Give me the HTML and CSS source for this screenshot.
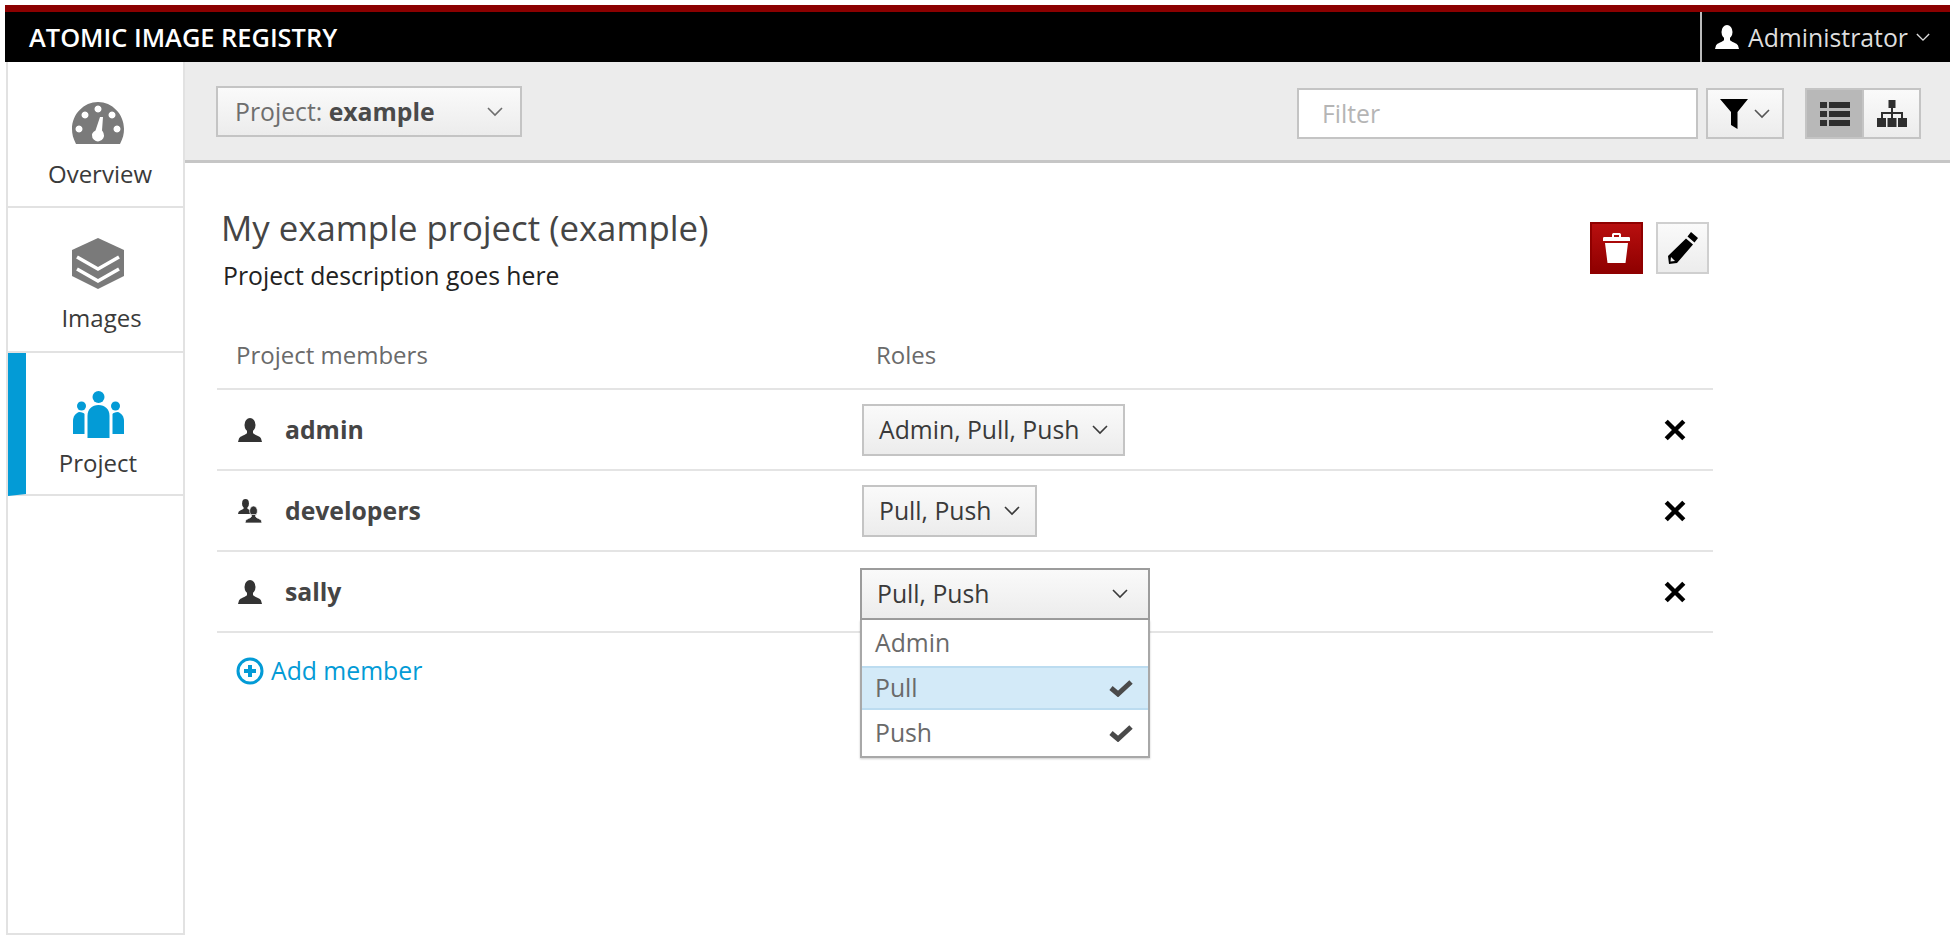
FILE: index.html
```html
<!DOCTYPE html>
<html lang="en">
<head>
    <meta charset="UTF-8">
    <title>Atomic Image Registry</title>
    <link rel="stylesheet" href="styles.css">
</head>
<body>
    <svg class="defs" width="0" height="0">
        <symbol id="chevron" viewBox="0 0 16 10"><polyline points="1,1 8,8 15,1" fill="none" stroke="currentColor" stroke-width="1.6"/></symbol>
        <symbol id="person" viewBox="0 0 24 24"><ellipse cx="12" cy="7" rx="5.5" ry="7"/><path d="M9 12 V15 C8 17 2 18 1 20.5 L0 24 H24 L23 20.5 C22 18 16 17 15 15 V12 Z"/></symbol>
        <symbol id="check" viewBox="0 0 24 18"><polyline points="2,9 9,15 22,3" fill="none" stroke="currentColor" stroke-width="5"/></symbol>
        <symbol id="close" viewBox="0 0 20 20"><path d="M2 2 L18 18 M18 2 L2 18" fill="none" stroke="currentColor" stroke-width="4"/></symbol>
    </svg>

    <div class="app">
        <header class="topbar">
            <div class="brand">ATOMIC IMAGE REGISTRY</div>
            <div class="user-menu">
                <svg class="user-icon"><use href="#person"/></svg>
                <span>Administrator</span>
                <svg class="chevron"><use href="#chevron"/></svg>
            </div>
        </header>

        <div class="layout">
            <nav class="sidebar">
                <a class="nav-item">
                    <svg class="nav-icon" width="52" height="42" viewBox="0 0 52 42">
                        <path fill-rule="evenodd" d="M4 42 C1 36 0 32 0 27 C0 12 12 0 26 0 C40 0 52 12 52 27 C52 32 51 36 48 42 Z M7 23.5 a3.5 3.5 0 1 0 .01 0 Z M13 9.5 a3.5 3.5 0 1 0 .01 0 Z M26 3.5 a3.5 3.5 0 1 0 .01 0 Z M40 9.5 a3.5 3.5 0 1 0 .01 0 Z M45 23.5 a3.5 3.5 0 1 0 .01 0 Z M28 15 L23.5 28.5 C20.5 30 20 32 20 33 a6 6 0 1 0 11.5 -2 C31 30 30.5 29 30 28.5 L31 15 Z"/>
                    </svg>
                    <span>Overview</span>
                </a>
                <a class="nav-item">
                    <svg class="nav-icon" width="52" height="51" viewBox="0 0 52 51">
                        <path d="M26 0 L52 12 V38 L26 51 L0 38 V12 Z"/>
                        <path d="M5 19 L26 31 L47 19 M5 31 L26 43 L47 31" fill="none" stroke="#fff" stroke-width="3.5"/>
                    </svg>
                    <span>Images</span>
                </a>
                <a class="nav-item active">
                    <svg class="nav-icon" width="51" height="47" viewBox="0 0 51 47">
                        <circle cx="25.5" cy="6" r="6"/>
                        <circle cx="8.5" cy="15" r="4.5"/>
                        <circle cx="42.5" cy="15" r="4.5"/>
                        <path d="M14.5 47 V25 C14.5 18 19 14 25.5 14 C32 14 36.5 18 36.5 25 V47 Z"/>
                        <path d="M0 43 V30 C0 25 3 22 6 21 C9 21 11 22 11.5 23 V43 Z"/>
                        <path d="M51 43 V30 C51 25 48 22 45 21 C42 21 40 22 39.5 23 V43 Z"/>
                    </svg>
                    <span>Project</span>
                </a>
            </nav>

            <main class="main">
                <div class="toolbar">
                    <button class="btn project-select">
                        <span>Project: <b>example</b></span>
                        <svg class="chevron"><use href="#chevron"/></svg>
                    </button>
                    <div class="toolbar-right">
                        <input class="filter-input" type="text" placeholder="Filter">
                        <button class="btn filter-btn">
                            <svg width="28" height="30" viewBox="0 0 28 30"><path d="M0 0 H28 L17.5 13 V30 L11 26 V13 Z"/></svg>
                            <svg class="chevron"><use href="#chevron"/></svg>
                        </button>
                        <div class="view-toggle">
                            <button class="btn active">
                                <svg width="30" height="24" viewBox="0 0 30 24"><path d="M0 0 H7 V6 H0 Z M9 0 H30 V6 H9 Z M0 9 H7 V15 H0 Z M9 9 H30 V15 H9 Z M0 18 H7 V24 H0 Z M9 18 H30 V24 H9 Z"/></svg>
                            </button>
                            <button class="btn">
                                <svg width="30" height="27" viewBox="0 0 30 27"><path d="M11.5 0 H18.5 V8 H16 V12 H26 V18 H30 V27 H21 V18 H24 V14 H16 V18 H19.500 V27 H10.500 V18 H14 V14 H6 V18 H9 V27 H0 V18 H4 V12 H14 V8 H11.500 Z"/></svg>
                            </button>
                        </div>
                    </div>
                </div>

                <div class="content">
                    <div class="project-head">
                        <div>
                            <h1>My example project (example)</h1>
                            <p>Project description goes here</p>
                        </div>
                        <div class="project-actions">
                            <button class="btn-icon danger">
                                <svg width="27" height="30" viewBox="0 0 27 30"><path d="M9 4 V1.500 C9 .5 10 0 11 0 H16 C17 0 18 .5 18 1.500 V4 H26 C27 4 27 5 27 6 V8 H0 V6 C0 5 0 4 1 4 Z M11 4 H16 V2 H11 Z M2 10 H25 L22.500 30 H4.500 Z"/></svg>
                            </button>
                            <button class="btn-icon">
                                <svg width="30" height="32" viewBox="0 0 30 32"><path d="M23 0 L30 6 L26.500 10.500 L19.500 4.500 Z M18 6.500 L25 12.500 L9 31 L1 32 L0 24 Z M3 25 L2.500 29.500 L7 29 Z" fill-rule="evenodd"/></svg>
                            </button>
                        </div>
                    </div>

                    <div class="member-row member-head">
                        <span class="head-name">Project members</span>
                        <span class="head-roles">Roles</span>
                    </div>
                    <div class="member-row">
                        <div class="member-name">
                            <svg class="member-icon"><use href="#person"/></svg>
                            admin
                        </div>
                        <button class="btn role-btn"><span>Admin, Pull, Push</span><svg class="chevron"><use href="#chevron"/></svg></button>
                        <svg class="remove"><use href="#close"/></svg>
                    </div>
                    <div class="member-row">
                        <div class="member-name">
                            <svg class="member-icon" viewBox="0 0 24 24">
                                <use href="#person" x="0" y="0" width="15" height="15"/>
                                <use href="#person" x="7" y="7" width="17" height="17" stroke="#fff" stroke-width="1"/>
                            </svg>
                            developers
                        </div>
                        <button class="btn role-btn"><span>Pull, Push</span><svg class="chevron"><use href="#chevron"/></svg></button>
                        <svg class="remove"><use href="#close"/></svg>
                    </div>
                    <div class="member-row">
                        <div class="member-name">
                            <svg class="member-icon"><use href="#person"/></svg>
                            sally
                        </div>
                        <div class="role-select open">
                            <button class="btn role-btn"><span>Pull, Push</span><svg class="chevron"><use href="#chevron"/></svg></button>
                            <ul class="role-menu">
                                <li>Admin</li>
                                <li class="hover">Pull<svg class="check"><use href="#check"/></svg></li>
                                <li>Push<svg class="check"><use href="#check"/></svg></li>
                            </ul>
                        </div>
                        <svg class="remove"><use href="#close"/></svg>
                    </div>
                    <a class="add-member">
                        <svg width="28" height="28" viewBox="0 0 28 28"><circle cx="14" cy="14" r="12" fill="none" stroke="currentColor" stroke-width="3"/><path d="M14 8 V20 M8 14 H20" stroke="currentColor" stroke-width="4"/></svg>
                        Add member
                    </a>
                </div>
            </main>
        </div>
    </div>
</body>
</html>
```

FILE: styles.css
```css
body {
    margin: 0;
    background: #fff;
    font-family: "Open Sans", "Noto Sans", sans-serif;
    font-size: 24.75px;
    color: #363636;
}
.defs {
    display: block;
    height: 0;
}
.app {
    margin: 5px 6px 0 5px;
}
.chevron {
    width: 16px;
    height: 10px;
    flex: none;
}

/* top bar */
.topbar {
    display: flex;
    justify-content: space-between;
    height: 50px;
    border-top: 7px solid #8b0000;
    background: #000;
    color: #fff;
}
.brand {
    padding-left: 24px;
    font-size: 25.4px;
    font-weight: 600;
    line-height: 50px;
}
.user-menu {
    display: flex;
    align-items: center;
    width: 250px;
    padding-left: 13px;
    box-sizing: border-box;
    border-left: 2px solid #bbb;
    color: #ddd;
}
.user-icon {
    width: 24px;
    height: 24px;
    margin-right: 9px;
    fill: #fff;
}
.user-menu span {
    font-size: 24.8px;
}
.user-menu .chevron {
    width: 14px;
    height: 9px;
    margin-left: 8px;
}

/* sidebar */
.layout {
    display: flex;
}
.sidebar {
    width: 179px;
    height: 873px;
    flex: none;
    margin-left: 1px;
    box-sizing: border-box;
    border: 2px solid #e2e2e2;
    border-top: 0;
}
.nav-item {
    display: flex;
    flex-direction: column;
    align-items: center;
    height: 145px;
    padding-left: 5px;
    box-sizing: border-box;
    border-bottom: 2px solid #e2e2e2;
    color: #3a3a3a;
    font-size: 24px;
}
.nav-icon {
    flex: none;
    fill: #7a7a7a;
}
.nav-item:nth-child(1) {
    height: 146px;
    padding-top: 40px;
}
.nav-item:nth-child(1) span {
    margin: 13px 0 0 4px;
}
.nav-item:nth-child(2) {
    padding-top: 30px;
}
.nav-item:nth-child(2) span {
    margin: 12px 0 0 7px;
}
.nav-item.active {
    height: 143px;
    padding-top: 38px;
    border-left: 18px solid #039bd6;
    padding-right: 18px;
}
.nav-item.active .nav-icon {
    fill: #039bd6;
}
.nav-item.active span {
    margin-top: 8px;
}

/* toolbar */
.main {
    flex: 1;
    min-width: 0;
}
.toolbar {
    display: flex;
    justify-content: space-between;
    height: 101px;
    padding: 24px 29px 0 31px;
    box-sizing: border-box;
    border-bottom: 3px solid #c6c6c6;
    background: #ececec;
}
.toolbar-right {
    display: flex;
    align-items: flex-start;
    padding-top: 2px;
}
.btn {
    display: flex;
    align-items: center;
    justify-content: space-between;
    box-sizing: border-box;
    border: 2px solid #c4c4c4;
    background: linear-gradient(#fafafa, #ececec);
    color: #363636;
    font-family: inherit;
    font-size: 24.75px;
    padding: 0;
}
.project-select {
    width: 306px;
    height: 51px;
    padding: 0 17px;
    color: #6e6e6e;
}
.project-select b {
    color: #4a4a4a;
}
.filter-input {
    width: 401px;
    height: 51px;
    box-sizing: border-box;
    padding: 0 23px;
    border: 2px solid #c4c4c4;
    background: #fff;
    font-family: inherit;
    font-size: 24.75px;
}
.filter-input::placeholder {
    color: #b5b5b5;
}
.filter-btn {
    width: 78px;
    height: 51px;
    margin-left: 8px;
    padding: 0 12px;
    color: #555;
}
.view-toggle {
    display: flex;
    margin-left: 21px;
}
.view-toggle .btn {
    justify-content: center;
    width: 59px;
    height: 51px;
}
.view-toggle .btn + .btn {
    margin-left: -2px;
}
.view-toggle .btn.active {
    background: #b8b8b8;
}
.view-toggle svg {
    fill: #2e2e2e;
}

/* project */
.content {
    width: 1496px;
    margin-left: 32px;
}
.project-head {
    display: flex;
    justify-content: space-between;
    align-items: flex-start;
    height: 142px;
    padding: 43px 4px 0 4px;
    box-sizing: border-box;
}
.project-head h1 {
    margin: 0;
    font-size: 34.75px;
    font-weight: 400;
    line-height: 44px;
    color: #454545;
}
.project-head p {
    margin: 11px 0 0 2px;
    line-height: 30px;
    color: #222;
}
.project-actions {
    display: flex;
    gap: 13px;
    padding-top: 16px;
}
.btn-icon {
    display: flex;
    align-items: center;
    justify-content: center;
    width: 53px;
    height: 52px;
    padding: 0;
    box-sizing: border-box;
    border: 2px solid #cfcfcf;
    background: linear-gradient(#fafafa, #ececec);
}
.btn-icon.danger {
    border-color: #8f0000;
    background: linear-gradient(#b80f0f, #8f0000);
    fill: #fff;
}

/* members */
.member-row {
    display: flex;
    align-items: center;
    height: 81px;
    box-sizing: border-box;
    border-bottom: 2px solid #e4e4e4;
    padding-right: 27px;
}
.member-head {
    height: 85px;
    padding-top: 15px;
    color: #6a6a6a;
    font-size: 24px;
}
.head-name {
    width: 659px;
    padding-left: 19px;
    box-sizing: border-box;
}
.member-name {
    display: flex;
    align-items: center;
    width: 645px;
    padding-left: 21px;
    box-sizing: border-box;
    font-weight: 700;
    color: #454545;
}
.member-icon {
    width: 24px;
    height: 24px;
    margin-right: 23px;
    fill: #333;
}
.role-btn {
    height: 52px;
    gap: 13px;
    padding: 0 15px;
    color: #3a3a3a;
}
.remove {
    width: 22px;
    height: 22px;
    margin-left: auto;
    color: #000;
}
.role-select {
    position: relative;
    width: 290px;
    margin: 4px 0 0 -2px;
}
.role-select .role-btn {
    width: 100%;
    border-color: #9c9c9c;
    padding: 0 20px 0 15px;
}
.role-menu {
    position: absolute;
    top: 52px;
    left: 0;
    right: 0;
    margin: 0;
    padding: 0;
    list-style: none;
    border: 2px solid #a8a8a8;
    border-top: 0;
    background: #fff;
    color: #6a6a6a;
    box-shadow: 0 1px 2px rgba(0, 0, 0, .2);
}
.role-menu li {
    display: flex;
    align-items: center;
    justify-content: space-between;
    height: 46px;
    padding: 0 15px 0 13px;
}
.role-menu li.hover {
    background: #d3eaf8;
    border-top: 2px solid #bcdcf0;
    border-bottom: 2px solid #bcdcf0;
    height: 44px;
    box-sizing: border-box;
}
.check {
    width: 24px;
    height: 18px;
    color: #4a4a4a;
}
.add-member {
    display: flex;
    align-items: center;
    gap: 7px;
    padding: 21px 0 0 19px;
    color: #039bd6;
}
```
